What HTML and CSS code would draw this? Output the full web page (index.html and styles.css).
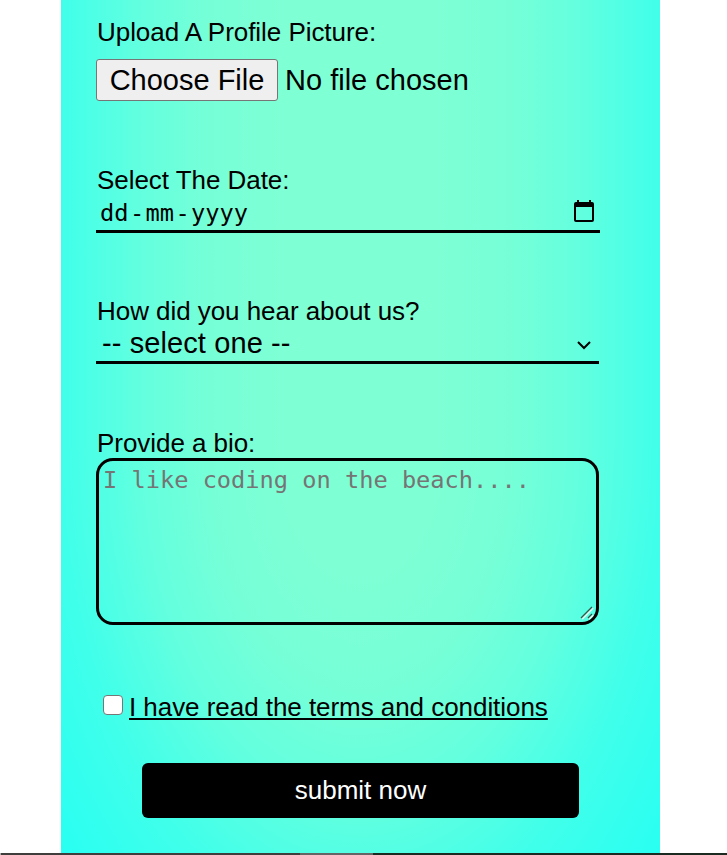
FILE: index.html
```html
<!DOCTYPE html>
<html lang="en">
<head>
<meta charset="utf-8">
<title>Form</title>
<link rel="stylesheet" href="styles.css">
</head>
<body>
<form class="form">
  <div class="field upload">
    <label class="label upload-label">Upload A Profile Picture:</label>
    <div class="file"><button type="button" class="file-button">Choose File</button><span class="file-name">No file chosen</span></div>
  </div>
  <div class="field date">
    <label class="label date-label">Select The Date:</label>
    <div class="control date-control">
      <div class="date-text"><span>dd</span><span class="dash">-</span><span>mm</span><span class="dash">-</span><span>yyyy</span></div>
      <svg class="calendar" width="20" height="22" viewBox="0 0 20 22"><path d="M3 0h2v2h10V0h2v2h1q2 0 2 2v16q0 2-2 2H2q-2 0-2-2V4q0-2 2-2h1zM2 7v13h16V7z" fill-rule="evenodd"/></svg>
    </div>
  </div>
  <div class="field source">
    <label class="label source-label">How did you hear about us?</label>
    <div class="control select-control">
      <span class="select-text">-- select one --</span>
      <svg class="chevron" width="14" height="9" viewBox="0 0 14 9"><path d="M1 1l6 6 6-6" fill="none" stroke="#000" stroke-width="2"/></svg>
    </div>
  </div>
  <div class="field bio">
    <label class="label bio-label" for="bio">Provide a bio:</label>
    <div class="bio-box">
      <textarea id="bio" class="textarea" placeholder="I like coding on the beach...."></textarea>
      <svg class="grip" width="14" height="14" viewBox="0 0 14 14" fill="none"><path d="M2 13L13 2M9 13l4-4" stroke="#d9fff3" stroke-width="2"/><path d="M1 12L12 1M8 12l4-4" stroke="#2c5a4c" stroke-width="1.4"/></svg>
    </div>
  </div>
  <div class="terms"><input type="checkbox" class="checkbox"><span class="label terms-label">I have read the terms and conditions</span></div>
  <button type="button" class="submit">submit now</button>
</form>
<div class="edge"><span class="edge-tip"></span><span class="edge-left"></span><span class="edge-thumb"></span><span class="edge-right"></span></div>
</body>
</html>
```
FILE: styles.css
```css
* { box-sizing: border-box; }
body {
  margin: 0;
  height: 855px;
  overflow: hidden;
  background: #fff;
  color: #000;
  font-family: "Liberation Sans", Arial, sans-serif;
}
.form {
  width: 599px;
  height: 853px;
  margin-left: 61px;
  padding: 17px 60px 0 35px;
  background:
    linear-gradient(90deg, #40ffea 0, #64ffde 14%, #76ffd7 25%, #7fffd4 38%, #7fffd4 62%, #76ffd7 75%, #64ffde 86%, #40ffea 100%) top / 100% 450px no-repeat,
    radial-gradient(478px 770px at 50% 450px, #7fffd4 15%, #76ffd7 31.3%, #64ffde 45%, #40ffea 62.5%, #28fff2 82%, #10fffa 100%);
}
.field { display: flex; flex-direction: column; }
.upload { height: 148px; }
.date { height: 131px; }
.source { height: 132px; }
.bio { height: 264px; }
.label {
  align-self: flex-start;
  margin-left: 1px;
  font-size: 26px;
  line-height: 30px;
  letter-spacing: -0.05px;
  white-space: nowrap;
}
.file { display: flex; align-items: center; margin-top: 12px; height: 42px; }
.file-button {
  width: 182px;
  height: 42px;
  padding: 0;
  border: 1px solid #767676;
  border-radius: 3px;
  background: #efefef;
  color: #000;
  font: 29px/38px "Liberation Sans", Arial, sans-serif;
}
.file-name { margin-left: 7px; font-size: 29px; white-space: nowrap; }
.control {
  display: flex;
  justify-content: space-between;
  border-bottom: 3px solid #000;
}
.date-control { height: 38px; padding: 0 6px 0 4px; }
.date-text {
  display: flex;
  font: 23.7px/36px "DejaVu Sans Mono", monospace;
}
.dash { width: 17px; text-align: center; }
.calendar { margin-top: 5px; }
.select-control { width: 503px; height: 38px; padding: 0 8px 0 6px; }
.select-text { font-size: 29px; line-height: 35px; letter-spacing: 0.1px; }
.chevron { margin-top: 15px; }
.bio-box { position: relative; width: 503px; height: 167px; }
.textarea {
  display: block;
  width: 503px;
  height: 167px;
  margin: 0;
  padding: 4px;
  border: 3px solid #000;
  border-radius: 17px;
  background: transparent;
  resize: none;
  font: 23.65px/30px "DejaVu Sans Mono", monospace;
}
.textarea::placeholder { color: #757575; }
.grip { position: absolute; right: 5px; bottom: 5px; }
.terms { display: flex; height: 71px; padding-left: 7px; }
.checkbox {
  appearance: none;
  width: 20px;
  height: 20px;
  margin: 3px 6px 0 0;
  border: 1px solid #767676;
  border-radius: 4px;
  background: #fff;
}
.terms-label {
  margin-left: 0;
  text-decoration: underline;
  text-decoration-thickness: 2px;
  text-underline-offset: 2px;
  text-decoration-skip-ink: none;
}
.submit {
  display: block;
  width: 437px;
  height: 55px;
  margin-left: 46px;
  padding: 0;
  border: 0;
  border-radius: 6px;
  background: #000;
  color: #fff;
  font: 26px/55px "Liberation Sans", Arial, sans-serif;
}
.edge { display: flex; height: 2px; }
.edge-tip { width: 1px; background: #aaa; }
.edge-left { width: 299px; background: #403d3d; }
.edge-thumb { width: 73px; background: #656565; }
.edge-right { flex: 1; background: #1c2b21; }
```
